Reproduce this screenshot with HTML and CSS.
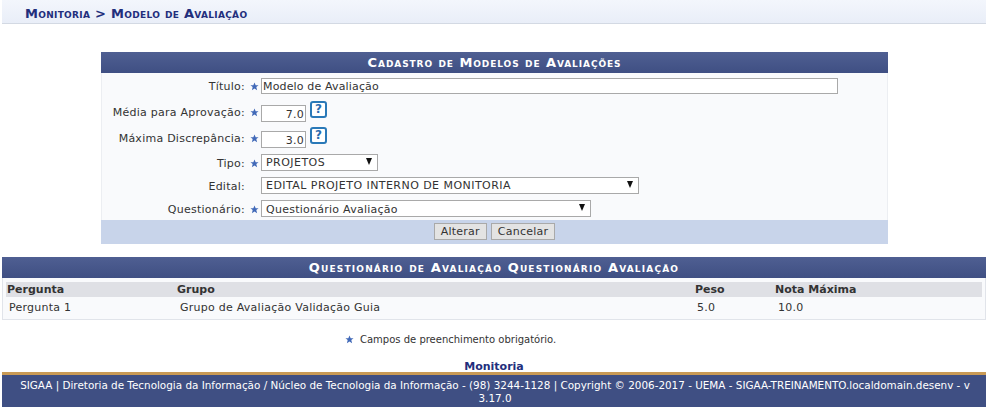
FILE: index.html
```html
<!DOCTYPE html>
<html lang="pt">
<head>
<meta charset="utf-8">
<title>Modelo de Avaliação</title>
<link rel="stylesheet" href="styles.css">
</head>
<body>
<svg class="defs" width="0" height="0"><symbol id="star" viewBox="0 0 10 10"><path d="M5 .6l1.3 3h3.2L7 5.6l.9 3.5L5 7.2 2.1 9.1 3 5.6.5 3.6h3.2z"/></symbol></svg>
<div class="page">
  <h2 class="crumb">Monitoria &gt; Modelo de Avaliação</h2>
  <section class="form-card">
    <h3 class="band">Cadastro de Modelos de Avaliações</h3>
    <div class="form-body">
      <div class="row r-title">
        <label class="lbl">Título:</label><svg class="star"><use href="#star"/></svg>
        <span class="field f-title">Modelo de Avaliação</span>
      </div>
      <div class="row r-num">
        <label class="lbl">Média para Aprovação:</label><svg class="star"><use href="#star"/></svg>
        <span class="field f-num">7.0</span><span class="help">?</span>
      </div>
      <div class="row r-num r-num2">
        <label class="lbl">Máxima Discrepância:</label><svg class="star"><use href="#star"/></svg>
        <span class="field f-num">3.0</span><span class="help">?</span>
      </div>
      <div class="row r-sel">
        <label class="lbl">Tipo:</label><svg class="star"><use href="#star"/></svg>
        <span class="field sel caps s-tipo">PROJETOS<i class="arrow"></i></span>
      </div>
      <div class="row r-sel">
        <label class="lbl">Edital:</label><span class="nostar"></span>
        <span class="field sel caps s-edital">EDITAL PROJETO INTERNO DE MONITORIA<i class="arrow"></i></span>
      </div>
      <div class="row r-sel r-last">
        <label class="lbl">Questionário:</label><svg class="star"><use href="#star"/></svg>
        <span class="field sel s-quest">Questionário Avaliação<i class="arrow"></i></span>
      </div>
    </div>
    <div class="actions"><button class="btn">Alterar</button><button class="btn">Cancelar</button></div>
  </section>
  <section class="list-card">
    <h3 class="band band-wide">Questionário de Avaliação Questionário Avaliação</h3>
    <div class="list-body">
      <div class="cols head"><span>Pergunta</span><span>Grupo</span><span>Peso</span><span>Nota Máxima</span></div>
      <div class="cols data"><span>Pergunta 1</span><span>Grupo de Avaliação Validação Guia</span><span>5.0</span><span>10.0</span></div>
    </div>
  </section>
  <p class="note"><svg class="star"><use href="#star"/></svg>Campos de preenchimento obrigatório.</p>
  <p class="module">Monitoria</p>
  <footer class="foot">SIGAA | Diretoria de Tecnologia da Informação / Núcleo de Tecnologia da Informação - (98) 3244-1128 | Copyright © 2006-2017 - UEMA - SIGAA-TREINAMENTO.localdomain.desenv - v 3.17.0</footer>
</div>
</body>
</html>
```
FILE: styles.css
```css
* { box-sizing: border-box; }
html, body { margin: 0; background: #fff; }
body { font: 11px "DejaVu Sans", Verdana, sans-serif; letter-spacing: .25px; color: #333; height: 416px; overflow: hidden; }
.defs { position: absolute; }
.page { margin-left: 2px; display: flex; flex-direction: column; }
.crumb { margin: 0; height: 24px; padding: 5px 0 0 23px; font-size: 13px; line-height: 17px; letter-spacing: .3px; font-weight: bold; font-variant: small-caps; color: #222e7c; background: linear-gradient(#f3f6fc, #e9eef8); border-bottom: 1px solid #d3d9e3; }
.form-card { width: 787px; margin: 28px 0 0 99px; background: #f9fafc; }
.band { margin: 0; height: 21px; background: linear-gradient(#4f5f92, #3f4f83); color: #fff; text-align: center; font-size: 13px; line-height: 22px; font-weight: bold; font-variant: small-caps; letter-spacing: .92px; }
.band-wide { letter-spacing: 1.17px; }
.form-body { padding-top: 5px; border-left: 1px solid #eceef2; border-right: 1px solid #eceef2; height: 147px; }
.row { display: flex; align-items: flex-start; }
.r-title { height: 23px; }
.r-num { height: 26px; }
.r-num2 { height: 27px; }
.r-sel { height: 23px; }
.lbl { width: 143px; text-align: right; line-height: 16px; margin: 1px 5px 0 0; }
.r-num .lbl { margin-top: 4px; }
.r-sel .lbl { margin-top: 2px; }
.star { width: 9px; height: 9px; fill: #4169b8; margin: 4px 2px 0 0; flex: none; }
.r-num .star { margin-top: 7px; }
.r-sel .star { margin-top: 5px; }
.nostar { width: 11px; flex: none; }
.field { display: block; position: relative; background: #fff; border: 1px solid #a9a9a9; color: #333; line-height: 16px; height: 16px; flex: none; }
.f-title { width: 577px; padding-left: 1px; letter-spacing: .15px; }
.f-num { width: 45px; height: 17px; margin-top: 4px; padding: 2px 1px 0 0; line-height: 14px; text-align: right; }
.sel { height: 17px; padding-left: 4px; line-height: 15px; }
.caps { letter-spacing: .45px; }
.r-last .sel { line-height: 17px; }
.s-tipo { width: 117px; }
.s-edital { width: 378px; }
.s-quest { width: 330px; }
.arrow { position: absolute; right: 5px; top: 3px; width: 0; height: 0; border: 3.5px solid transparent; border-top: 7px solid #111; border-bottom: 0; }
.help { width: 17px; height: 17px; margin-left: 4px; border: 2px solid #2a79b8; border-radius: 3px; background: #fff; color: #2a6cb0; font-size: 12px; letter-spacing: 0; line-height: 13px; font-weight: bold; text-align: center; }
.actions { height: 24px; background: #c8d4ea; display: flex; justify-content: center; gap: 4px; padding-top: 3px; }
.btn { font: 11px "DejaVu Sans", Verdana, sans-serif; letter-spacing: .25px; color: #333; height: 17px; padding: 0 6px; border: 1px solid #a9a9a9; background: #e3e3e3; border-radius: 0; }
.list-card { margin-top: 13px; }
.list-body { height: 42px; padding: 4px 3px 0; background: #f9fafc; border: 1px solid #e1e4ea; border-top: 0; }
.cols { display: grid; grid-template-columns: 170px 518px 80px 1fr; }
.head { height: 15px; background: #dfe0e5; font-weight: bold; letter-spacing: 0; line-height: 15px; color: #333; padding-left: 1px; }
.data { height: 22px; line-height: 21px; padding-left: 3px; grid-template-columns: 171px 517px 81px 1fr; }
.note { margin: 13px 0 0; font-size: 10px; letter-spacing: 0; line-height: 13px; padding-left: 343px; }
.note .star { vertical-align: -1px; margin: 0 6px 0 0; }
.module { margin: 14px 0 0; height: 12px; text-align: center; font-weight: bold; letter-spacing: 0; color: #222e7c; line-height: 13px; }
.foot { height: 35px; border-top: 3px solid #c99a55; background: #3f4f83; color: #fff; text-align: center; font-size: 10.4px; letter-spacing: 0; line-height: 13px; padding: 4px 2px 0 4px; }
```
